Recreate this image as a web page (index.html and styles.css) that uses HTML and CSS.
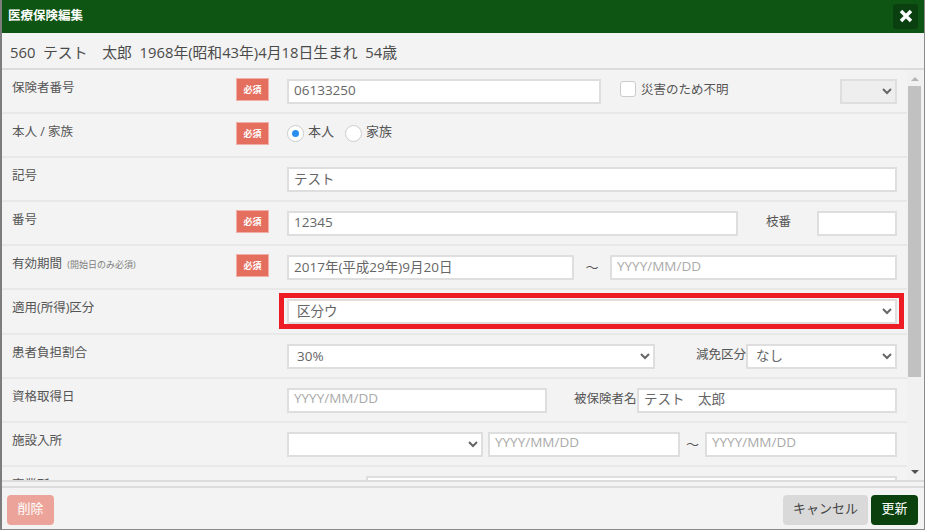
FILE: index.html
```html
<!DOCTYPE html>
<html lang="ja">
<head>
  <meta charset="UTF-8">
  <title>医療保険編集</title>
  <link rel="stylesheet" href="styles.css">
</head>
<body>
  <div class="dialog">
    <header class="dialog-head">
      <h1>医療保険編集</h1>
      <button class="close-btn" type="button" aria-label="閉じる">
        <svg width="14" height="14" viewBox="0 0 14 14"><path d="M2 2 L12 12 M12 2 L2 12" stroke="#fff" stroke-width="3.4" fill="none"/></svg>
      </button>
    </header>
    <div class="patient">560&nbsp; テスト　太郎&nbsp; 1968年(昭和43年)4月18日生まれ&nbsp; 54歳</div>

    <div class="body">
      <div class="rows">
        <div class="row">
          <div class="row-label">保険者番号</div>
          <div class="row-badge"><span class="badge">必須</span></div>
          <div class="row-ctrl">
            <input class="w-314" type="text" value="06133250">
            <label class="check"><span class="check-box"></span>災害のため不明</label>
            <select class="w-57 to-right" disabled><option></option></select>
          </div>
        </div>
        <div class="row">
          <div class="row-label">本人 / 家族</div>
          <div class="row-badge"><span class="badge">必須</span></div>
          <div class="row-ctrl radios">
            <label class="radio"><span class="radio-dot on"></span>本人</label>
            <label class="radio"><span class="radio-dot"></span>家族</label>
          </div>
        </div>
        <div class="row">
          <div class="row-label">記号</div>
          <div class="row-badge"></div>
          <div class="row-ctrl"><input class="grow" type="text" value="テスト"></div>
        </div>
        <div class="row">
          <div class="row-label">番号</div>
          <div class="row-badge"><span class="badge">必須</span></div>
          <div class="row-ctrl">
            <input class="grow" type="text" value="12345">
            <span class="inline-label branch">枝番</span>
            <input class="w-80" type="text">
          </div>
        </div>
        <div class="row">
          <div class="row-label">有効期間 <small>(開始日のみ必須)</small></div>
          <div class="row-badge"><span class="badge">必須</span></div>
          <div class="row-ctrl">
            <input class="grow" type="text" value="2017年(平成29年)9月20日">
            <span class="tilde wide">～</span>
            <input class="grow" type="text" placeholder="YYYY/MM/DD">
          </div>
        </div>
        <div class="row">
          <div class="row-label">適用(所得)区分</div>
          <div class="row-badge"></div>
          <div class="row-ctrl">
            <div class="marked">
              <select><option>区分ウ</option></select>
              <span class="marker"></span>
            </div>
          </div>
        </div>
        <div class="row">
          <div class="row-label">患者負担割合</div>
          <div class="row-badge"></div>
          <div class="row-ctrl">
            <select class="w-368"><option>30%</option></select>
            <span class="inline-label reduce">減免区分</span>
            <select class="grow"><option>なし</option></select>
          </div>
        </div>
        <div class="row">
          <div class="row-label">資格取得日</div>
          <div class="row-badge"></div>
          <div class="row-ctrl">
            <input class="w-260" type="text" placeholder="YYYY/MM/DD">
            <span class="inline-label insured">被保険者名</span>
            <input class="grow" type="text" value="テスト　太郎">
          </div>
        </div>
        <div class="row">
          <div class="row-label">施設入所</div>
          <div class="row-badge"></div>
          <div class="row-ctrl">
            <select class="w-196"><option></option></select>
            <input class="w-192 gap-5" type="text" placeholder="YYYY/MM/DD">
            <span class="tilde">～</span>
            <input class="grow" type="text" placeholder="YYYY/MM/DD">
          </div>
        </div>
        <div class="row">
          <div class="row-label">事業所</div>
          <div class="row-badge"></div>
          <div class="row-ctrl">
            <span class="inline-label office">所在地</span>
            <input class="grow" type="text">
          </div>
        </div>
      </div>

      <div class="scrollbar">
        <div class="arrow-up"></div>
        <div class="thumb"></div>
        <div class="arrow-down"></div>
      </div>
    </div>

    <footer class="dialog-foot">
      <button class="btn btn-delete" type="button">削除</button>
      <div class="foot-right">
        <button class="btn btn-cancel" type="button">キャンセル</button>
        <button class="btn btn-update" type="button">更新</button>
      </div>
    </footer>
  </div>
</body>
</html>
```

FILE: styles.css
```css
/* Reset & base */
* { margin: 0; padding: 0; box-sizing: border-box; }
html, body { height: 100%; overflow: hidden; }
body { background: #fff; color: #555; font-family: "Open Sans", "Noto Sans CJK JP", sans-serif; font-size: 13px; }
input, select, button { font-family: inherit; }

/* Dialog */
.dialog { display: flex; flex-direction: column; width: 925px; height: 530px; background: #f3f3f3; border-left: 2px solid #7d7d7d; border-right: 1px solid #8a8a8a; border-bottom: 1px solid #8a8a8a; }
.dialog-head { flex: none; display: flex; justify-content: space-between; align-items: center; height: 33px; padding: 0 6px; background: #0e5513; color: #fff; }
.dialog-head h1 { font-size: 12.5px; font-weight: 700; margin-top: -4px; }
.close-btn { display: flex; align-items: center; justify-content: center; width: 25px; height: 25px; margin-top: -1px; background: #0a4010; border: 0; border-radius: 3px; }
.patient { flex: none; height: 37px; padding: 0 8px; line-height: 39px; font-size: 14.8px; color: #4a4a4a; border-bottom: 2px solid #dcdcdc; white-space: nowrap; }

/* Scrolling body */
.body { flex: none; display: flex; height: 412px; overflow: hidden; border-bottom: 2px solid #dcdcdc; }
.rows { flex: none; width: 905px; }
.row { display: flex; height: 44.1px; border-bottom: 2px solid #e8e8e8; }
.row-label { flex: none; width: 234px; padding: 8px 0 0 10px; font-size: 12.5px; line-height: 20px; }
.row-label small { margin-left: 2px; font-size: 9px; color: #808080; }
.row-badge { flex: none; width: 51px; padding-top: 8px; }
.badge { display: flex; align-items: center; justify-content: center; width: 33px; height: 23px; background: #e56f5f; border: 1px solid #f0b0a8; color: #fff; font-size: 9px; font-weight: 700; }
.row-ctrl { flex: none; display: flex; align-items: flex-start; width: 610px; padding-top: 9px; }

/* Form controls */
input, select { height: 25px; background: #fff; border: 2px solid #dedede; color: #666; font-size: 13.5px; border-radius: 0; min-width: 0; }
input { padding: 0 5px 4px; }
select { padding: 0 4px 3px; }
input::placeholder { color: #aaa; opacity: 1; }
select:disabled { background: #eee; opacity: 1; }
.grow { flex: 1; }
.w-57 { width: 57px; }
.w-80 { width: 80px; }
.w-192 { width: 192px; }
.w-196 { width: 196px; }
.w-260 { width: 260px; }
.w-314 { width: 314px; }
.w-368 { width: 368px; }
.gap-5 { margin-left: 5px; }
.to-right { margin-left: auto; }

/* Red annotation frame over the select */
.marked { position: relative; flex: 1; display: flex; }
.marked select { flex: 1; }
.marker { position: absolute; inset: -6px -7px -5px -8px; border: 5px solid #ed1c24; pointer-events: none; }

.inline-label { line-height: 22px; font-size: 12.5px; white-space: nowrap; }
.branch { width: 79px; padding-left: 28px; }
.reduce { width: 91px; padding-left: 41px; }
.insured { width: 90px; padding-left: 27px; }
.office { width: 79px; padding-left: 4px; }
.tilde { width: 25px; text-align: center; line-height: 24px; color: #555; }
.tilde.wide { width: 36px; }

.check { display: flex; align-items: flex-start; margin-left: 19px; padding-top: 1px; font-size: 12.5px; line-height: 20px; }
.check-box { width: 16px; height: 16px; margin: 1px 5px 0 0; background: #fff; border: 1px solid #ccc; border-radius: 3px; }
.radios { padding-top: 6px; }
.radio { display: flex; align-items: center; margin-right: 11px; font-size: 13px; line-height: 22px; }
.radio-dot { position: relative; width: 17px; height: 17px; margin: 4px 4px 0 0; background: #fff; border: 1px solid #ccc; border-radius: 50%; }
.radio-dot.on::after { content: ""; position: absolute; left: 4px; top: 4px; width: 7px; height: 7px; background: #2b8ff0; border-radius: 50%; }

/* Scrollbar */
.scrollbar { flex: none; display: flex; flex-direction: column; align-items: center; width: 15px; background: #f1f1f1; }
.arrow-up, .arrow-down { flex: none; width: 0; height: 0; border-left: 4px solid transparent; border-right: 4px solid transparent; }
.arrow-up { margin: 7px 0 5px; border-bottom: 4px solid #b5b5b5; }
.arrow-down { margin: 93px 0 0; border-top: 4px solid #505050; }
.thumb { flex: none; width: 13px; height: 291px; background: #c1c1c1; }

/* Footer */
.dialog-foot { flex: 1; display: flex; justify-content: space-between; align-items: flex-start; margin-top: 4px; padding: 7px 6px 0 5px; border-top: 2px solid #dcdcdc; }
.foot-right { display: flex; gap: 3px; }
.btn { height: 30px; padding-bottom: 6px; border: 0; border-radius: 4px; font-size: 13px; }
.btn-delete { width: 47px; background: #eca49a; color: #fff; }
.btn-cancel { width: 85px; background: #d9d9d9; color: #444; }
.btn-update { width: 47px; background: #0a410d; color: #fff; }
```
